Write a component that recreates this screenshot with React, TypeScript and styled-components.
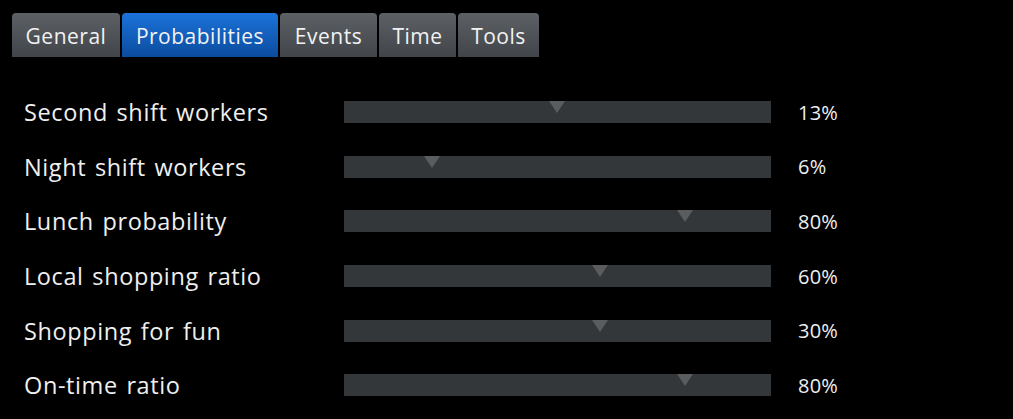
import React from "react";
import styled, { createGlobalStyle } from "styled-components";

const Global = createGlobalStyle`
  html, body { margin: 0; padding: 0; background: #000; }
  body { font-family: "Open Sans", "Noto Sans", sans-serif; color: #ececec; }
`;

const Page = styled.div`
  width: 1013px;
  height: 419px;
  background: #000;
  overflow: hidden;
`;

const TabBar = styled.div`
  display: flex;
  gap: 2px;
  padding: 13px 0 0 12px;
  height: 44px;
`;

const Tab = styled.div<{ $active?: boolean; $w: number }>`
  width: ${(p) => p.$w}px;
  height: 44px;
  box-sizing: border-box;
  display: flex;
  align-items: center;
  justify-content: center;
  padding-top: 1px;
  border-radius: 4px 4px 0 0;
  font-size: 21px;
  font-weight: 500;
  letter-spacing: 0.5px;
  color: #f2f2f2;
  background: ${(p) =>
    p.$active
      ? "linear-gradient(#1b72da, #0b4c9e)"
      : "linear-gradient(#5d6165, #414549)"};
`;

const Rows = styled.div`
  display: grid;
  grid-template-columns: 293px 427px auto;
  grid-auto-rows: 54.6px;
  column-gap: 27px;
  padding: 28px 0 0 24px;
  align-items: center;
`;

const Label = styled.div`
  font-size: 23.5px;
  font-weight: 500;
  letter-spacing: 0.6px;
  word-spacing: 2px;
  color: #efefef;
`;

const Track = styled.div`
  position: relative;
  height: 22px;
  background: #33373a;
`;

const Marker = styled.div`
  position: absolute;
  top: 0;
  width: 0;
  height: 0;
  margin-left: -8.5px;
  border-left: 8.5px solid transparent;
  border-right: 8.5px solid transparent;
  border-top: 12px solid #5b5c5e;
`;

const Value = styled.div`
  font-size: 20px;
  font-weight: 500;
  letter-spacing: 0.2px;
  color: #efefef;
`;

const tabs = [
  { name: "General", w: 108 },
  { name: "Probabilities", w: 156, active: true },
  { name: "Events", w: 97 },
  { name: "Time", w: 77 },
  { name: "Tools", w: 81 },
];

const rows = [
  { label: "Second shift workers", pos: 0.499, value: "13%" },
  { label: "Night shift workers", pos: 0.208, value: "6%" },
  { label: "Lunch probability", pos: 0.8, value: "80%" },
  { label: "Local shopping ratio", pos: 0.6, value: "60%" },
  { label: "Shopping for fun", pos: 0.6, value: "30%" },
  { label: "On-time ratio", pos: 0.8, value: "80%" },
];

export default function App() {
  return (
    <Page>
      <Global />
      <TabBar>
        {tabs.map((t) => (
          <Tab key={t.name} $w={t.w} $active={t.active}>
            {t.name}
          </Tab>
        ))}
      </TabBar>
      <Rows>
        {rows.map((r) => (
          <React.Fragment key={r.label}>
            <Label>{r.label}</Label>
            <Track>
              <Marker style={{ left: `${r.pos * 100}%` }} />
            </Track>
            <Value>{r.value}</Value>
          </React.Fragment>
        ))}
      </Rows>
    </Page>
  );
}
